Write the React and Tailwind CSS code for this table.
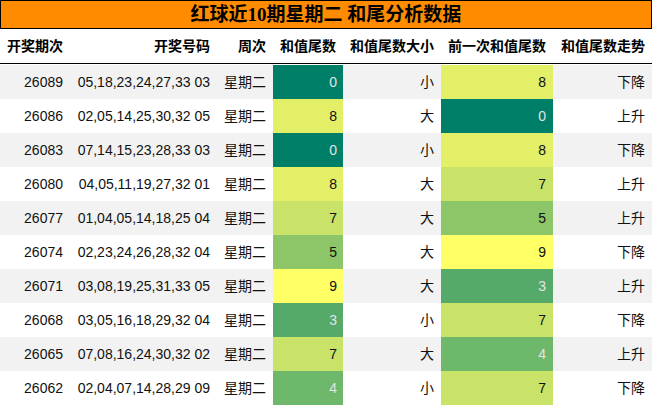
const rows = [
  ["26089", "05,18,23,24,27,33 03", 0, "小", 8, "下降"],
  ["26086", "02,05,14,25,30,32 05", 8, "大", 0, "上升"],
  ["26083", "07,14,15,23,28,33 03", 0, "小", 8, "下降"],
  ["26080", "04,05,11,19,27,32 01", 8, "大", 7, "上升"],
  ["26077", "01,04,05,14,18,25 04", 7, "大", 5, "上升"],
  ["26074", "02,23,24,26,28,32 04", 5, "大", 9, "下降"],
  ["26071", "03,08,19,25,31,33 05", 9, "大", 3, "上升"],
  ["26068", "03,05,16,18,29,32 04", 3, "小", 7, "下降"],
  ["26065", "07,08,16,24,30,32 02", 7, "大", 4, "上升"],
  ["26062", "02,04,07,14,28,29 09", 4, "小", 7, "下降"],
];

const cellColor = {
  0: "bg-[#007f68] text-[#e4e4e4]",
  3: "bg-[#55aa6a] text-[#e4e4e4]",
  4: "bg-[#6db86a] text-[#e4e4e4]",
  5: "bg-[#8dc668] text-[#111]",
  7: "bg-[#c9e369] text-[#111]",
  8: "bg-[#e3ef67] text-[#111]",
  9: "bg-[#ffff66] text-[#111]",
};

const cols = "grid grid-cols-[70px_147px_56px_70px_98px_112px_99px]";
const font = { fontFamily: '"Liberation Sans", "Noto Sans CJK SC", sans-serif' };

export default function App() {
  return (
    <div className="w-[652px] h-[406px] bg-white overflow-hidden text-[14px] text-[#111]" style={font}>
      <div className="h-[29px] border border-black bg-[#ff8c00] flex items-center justify-center">
        <span
          className="text-[19px] font-bold text-black leading-none"
          style={{ fontFamily: '"Liberation Serif", "Noto Sans CJK SC", serif' }}
        >
          红球近10期星期二 和尾分析数据
        </span>
      </div>
      <div className={`${cols} h-[35px] border-b border-black font-bold text-black`}>
        {["开奖期次", "开奖号码", "周次", "和值尾数", "和值尾数大小", "前一次和值尾数", "和值尾数走势"].map((h) => (
          <div key={h} className="flex items-center justify-end pr-[7px] whitespace-nowrap">
            {h}
          </div>
        ))}
      </div>
      <div className="mt-px">
        {rows.map((r, i) => (
          <div key={r[0]} className={`${cols} h-[34px] ${i % 2 === 0 ? "bg-[#f2f2f2]" : "bg-white"}`}>
            <div className="flex items-center justify-end pr-[7px]">{r[0]}</div>
            <div className="flex items-center justify-end pr-[7px] whitespace-nowrap">{r[1]}</div>
            <div className="flex items-center justify-end pr-[7px] whitespace-nowrap">星期二</div>
            <div className={`flex items-center justify-end pr-[6px] ${cellColor[r[2]]}`}>{r[2]}</div>
            <div className="flex items-center justify-end pr-[7px]">{r[3]}</div>
            <div className={`flex items-center justify-end pr-[7px] ${cellColor[r[4]]}`}>{r[4]}</div>
            <div className="flex items-center justify-end pr-[7px]">{r[5]}</div>
          </div>
        ))}
      </div>
    </div>
  );
}
